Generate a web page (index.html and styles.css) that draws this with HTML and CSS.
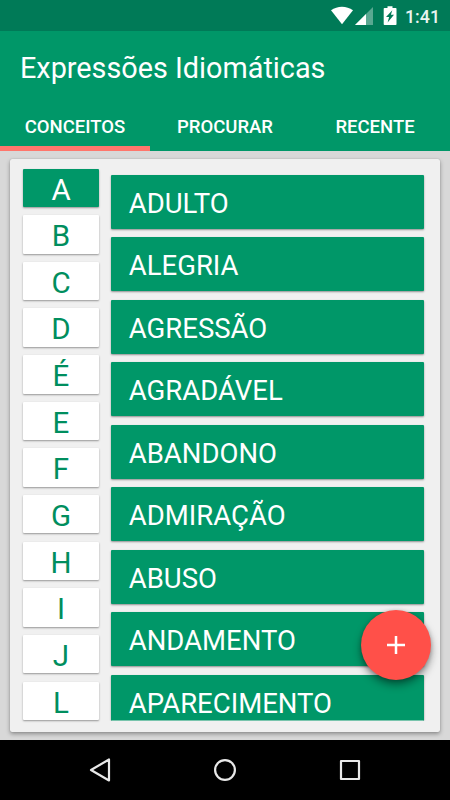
FILE: index.html
```html
<!DOCTYPE html>
<html lang="pt">
<head>
<meta charset="utf-8">
<title>Expressões Idiomáticas</title>
<link rel="stylesheet" href="styles.css">
</head>
<body>
<div class="screen">
  <div class="status">
    <svg class="status-icons" width="68" height="31" viewBox="0 0 68 31">
      <path fill="#fff" d="M0 10.200C6.400 5.500 15.600 5.500 22 10.200L11 24.300z"/>
      <path fill="#fff" opacity=".35" d="M42 7v18H24z"/>
      <path fill="#fff" d="M35 14v11H24z"/>
      <path fill="#fff" d="M53.500 8h3V6.300h5V8h3.200q.8 0 .8.800v15.400q0 .800-.8.800H53.500q-.8 0-.8-.800V8.800q0-.8.800-.8z"/>
      <path fill="#007a57" d="M61.300 10.300L55 17.100h3.100l-1.500 5.400 6.400-7.700h-3.100z"/>
    </svg>
    <span class="clock">1:41</span>
  </div>
  <header>
    <h1>Expressões Idiomáticas</h1>
    <nav>
      <span class="tab selected">CONCEITOS</span>
      <span class="tab">PROCURAR</span>
      <span class="tab">RECENTE</span>
    </nav>
  </header>
  <main>
    <div class="card">
      <div class="letters">
        <div class="letter active">A</div>
        <div class="letter">B</div>
        <div class="letter">C</div>
        <div class="letter">D</div>
        <div class="letter">É</div>
        <div class="letter">E</div>
        <div class="letter">F</div>
        <div class="letter">G</div>
        <div class="letter">H</div>
        <div class="letter">I</div>
        <div class="letter">J</div>
        <div class="letter">L</div>
      </div>
      <div class="concepts">
        <div class="concept">ADULTO</div>
        <div class="concept">ALEGRIA</div>
        <div class="concept">AGRESSÃO</div>
        <div class="concept">AGRADÁVEL</div>
        <div class="concept">ABANDONO</div>
        <div class="concept">ADMIRAÇÃO</div>
        <div class="concept">ABUSO</div>
        <div class="concept">ANDAMENTO</div>
        <div class="concept">APARECIMENTO</div>
      </div>
    </div>
    <div class="fab">
      <svg width="18" height="18" viewBox="0 0 18 18"><path d="M9 0v18M0 9h18" stroke="#fff" stroke-width="2.500"/></svg>
    </div>
  </main>
  <footer>
    <svg width="450" height="60" viewBox="0 0 450 60" fill="none" stroke="#e8e8e8" stroke-width="2.200" stroke-linejoin="round">
      <path d="M109 19.500v21L91 30z"/>
      <circle cx="225" cy="30" r="9.900"/>
      <rect x="341" y="21" width="18" height="18"/>
    </svg>
  </footer>
</div>
</body>
</html>
```
FILE: styles.css
```css
* { box-sizing: border-box; }
body {
  margin: 0;
  font-family: Roboto, "Liberation Sans", sans-serif;
  color: #fff;
}
.screen {
  width: 450px;
  height: 800px;
  display: flex;
  flex-direction: column;
  overflow: hidden;
}
.status {
  height: 31px;
  flex: none;
  background: #007a57;
  display: flex;
  justify-content: flex-end;
  padding-right: 12px;
}
.status-icons { margin-right: 6px; }
.clock {
  font-size: 17.800px;
  font-weight: 500;
  line-height: 33px;
  width: 33px;
  color: #e8f4f0;
  white-space: nowrap;
}
header {
  height: 120px;
  flex: none;
  background: #009768;
  display: flex;
  flex-direction: column;
}
h1 {
  margin: 0;
  padding-left: 20px;
  height: 72px;
  font-size: 28.800px;
  font-weight: 400;
  line-height: 75px;
  white-space: nowrap;
}
nav {
  display: flex;
  height: 48px;
}
.tab {
  flex: 1;
  text-align: center;
  font-size: 18.500px;
  font-weight: 500;
  line-height: 48px;
}
.selected { border-bottom: 5px solid #ff766c; }
main {
  height: 589px;
  flex: none;
  position: relative;
  background: #d8d8d8;
  padding: 8px 10.500px 8px 10px;
}
.card {
  height: 573px;
  background: #f0f0f0;
  border-radius: 2px;
  box-shadow: 0 2px 4px rgba(0, 0, 0, .35), 0 0 1px rgba(0, 0, 0, .3);
  padding: 9.500px 15.500px 0 13px;
  display: flex;
  gap: 12px;
}
.letters {
  width: 76px;
  display: flex;
  flex-direction: column;
  gap: 8.150px;
}
.letter {
  height: 38.500px;
  flex: none;
  background: #fff;
  color: #008e5e;
  border-radius: 1px;
  box-shadow: 0 1px 2px rgba(0, 0, 0, .38);
  text-align: center;
  font-size: 29.500px;
  line-height: 42.500px;
}
.active {
  background: #009768;
  color: #fff;
}
.concepts {
  flex: 1;
  height: 552px;
  padding-top: 6.200px;
  display: flex;
  flex-direction: column;
  gap: 8.500px;
  clip-path: inset(0 -4px 0 -4px);
}
.concept {
  height: 54px;
  flex: none;
  background: #009768;
  border-radius: 1px;
  box-shadow: 0 1px 2px rgba(0, 0, 0, .4);
  padding-left: 17.800px;
  font-size: 27.500px;
  line-height: 58.500px;
}
.fab {
  position: absolute;
  left: 361px;
  top: 459px;
  width: 70px;
  height: 70px;
  border-radius: 50%;
  background: #ff5049;
  box-shadow: 0 5px 9px rgba(0, 0, 0, .4), 0 1px 4px rgba(0, 0, 0, .2);
  display: flex;
  align-items: center;
  justify-content: center;
}
footer {
  height: 60px;
  flex: none;
  background: #000;
}
footer svg { display: block; }
```
